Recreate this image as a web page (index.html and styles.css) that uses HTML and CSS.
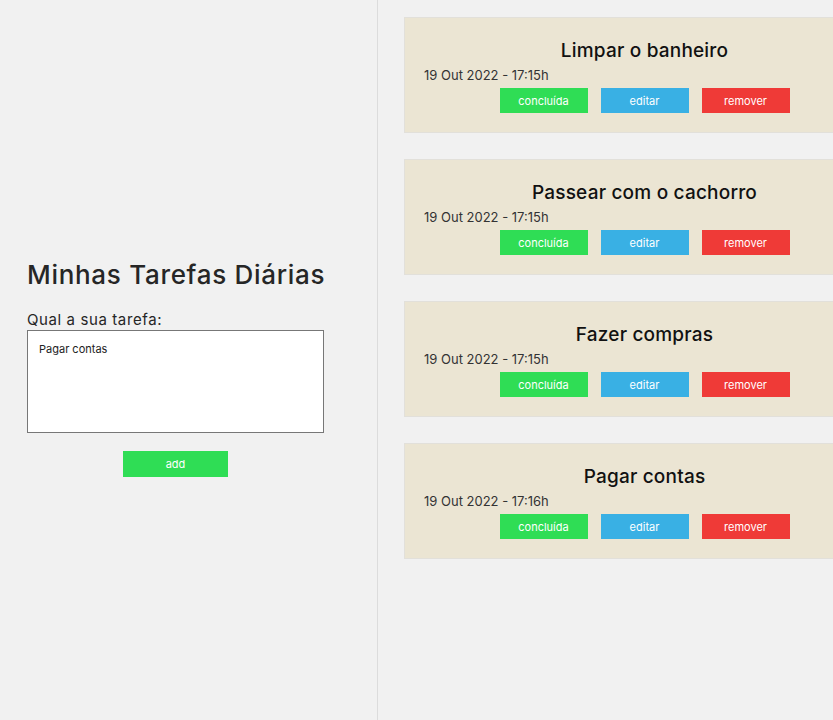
FILE: index.html
```html
<!DOCTYPE html>
<html lang="pt">
<head>
<meta charset="utf-8">
<title>Minhas Tarefas Diárias</title>
<link rel="stylesheet" href="styles.css">
</head>
<body>
<div class="app">
  <aside class="sidebar">
    <h1 class="title">Minhas Tarefas Diárias</h1>
    <label class="label" for="task">Qual a sua tarefa:</label>
    <textarea id="task" class="input">Pagar contas</textarea>
    <button class="btn btn-green add">add</button>
  </aside>
  <main class="list">
    <div class="card">
      <h2 class="card-title">Limpar o banheiro</h2>
      <p class="card-date">19 Out 2022 - 17:15h</p>
      <div class="actions">
        <button class="btn btn-green">concluída</button>
        <button class="btn btn-blue">editar</button>
        <button class="btn btn-red">remover</button>
      </div>
    </div>
    <div class="card">
      <h2 class="card-title">Passear com o cachorro</h2>
      <p class="card-date">19 Out 2022 - 17:15h</p>
      <div class="actions">
        <button class="btn btn-green">concluída</button>
        <button class="btn btn-blue">editar</button>
        <button class="btn btn-red">remover</button>
      </div>
    </div>
    <div class="card">
      <h2 class="card-title">Fazer compras</h2>
      <p class="card-date">19 Out 2022 - 17:15h</p>
      <div class="actions">
        <button class="btn btn-green">concluída</button>
        <button class="btn btn-blue">editar</button>
        <button class="btn btn-red">remover</button>
      </div>
    </div>
    <div class="card">
      <h2 class="card-title">Pagar contas</h2>
      <p class="card-date">19 Out 2022 - 17:16h</p>
      <div class="actions">
        <button class="btn btn-green">concluída</button>
        <button class="btn btn-blue">editar</button>
        <button class="btn btn-red">remover</button>
      </div>
    </div>
  </main>
</div>
</body>
</html>
```
FILE: styles.css
```css
* { box-sizing: border-box; }
html, body {
  margin: 0;
  padding: 0;
  height: 720px;
  overflow: hidden;
  background: #f1f1f1;
  font-family: "Inter", "Open Sans", sans-serif;
  color: #222;
}
.app {
  display: flex;
  height: 720px;
}
.sidebar {
  width: 378px;
  flex-shrink: 0;
  border-right: 1px solid #dcdcdc;
  display: flex;
  flex-direction: column;
  justify-content: center;
  padding: 14px 0 0 27px;
}
.title {
  margin: 0;
  font-size: 26px;
  line-height: 34px;
  letter-spacing: 0.7px;
  font-weight: 500;
  color: #262626;
}
.label {
  margin-top: 18px;
  font-size: 15px;
  line-height: 20px;
  letter-spacing: 0.6px;
  color: #262626;
}
.input {
  width: 297px;
  height: 103px;
  margin-top: 0;
  border: 1px solid #777;
  background: #fff;
  padding: 11px 11px;
  font-family: inherit;
  font-size: 11px;
  color: #222;
  resize: none;
}
.btn {
  border: none;
  font-family: inherit;
  font-size: 11px;
  color: #fff;
  padding: 0;
  cursor: pointer;
}
.btn-green { background: #2fdd55; }
.btn-blue { background: #39b0e4; }
.btn-red { background: #ef3a37; }
.add {
  width: 105px;
  height: 26px;
  margin: 18px 0 0 96px;
}
.list {
  flex-shrink: 0;
  padding: 17px 0 0 26px;
  display: flex;
  flex-direction: column;
  gap: 26px;
}
.card {
  width: 482px;
  height: 116px;
  background: #ebe5d3;
  border: 1px solid #e2e0da;
  padding: 19px 20px 0 19px;
}
.card-title {
  margin: 0;
  text-align: center;
  font-size: 19px;
  line-height: 28px;
  font-weight: 500;
  letter-spacing: 0.2px;
  color: #111;
}
.card-date {
  margin: 0;
  font-size: 13px;
  line-height: 20px;
  color: #333;
}
.actions {
  display: flex;
  justify-content: center;
  gap: 13px;
  margin-top: 3px;
}
.actions .btn {
  width: 88px;
  height: 25px;
}
```
